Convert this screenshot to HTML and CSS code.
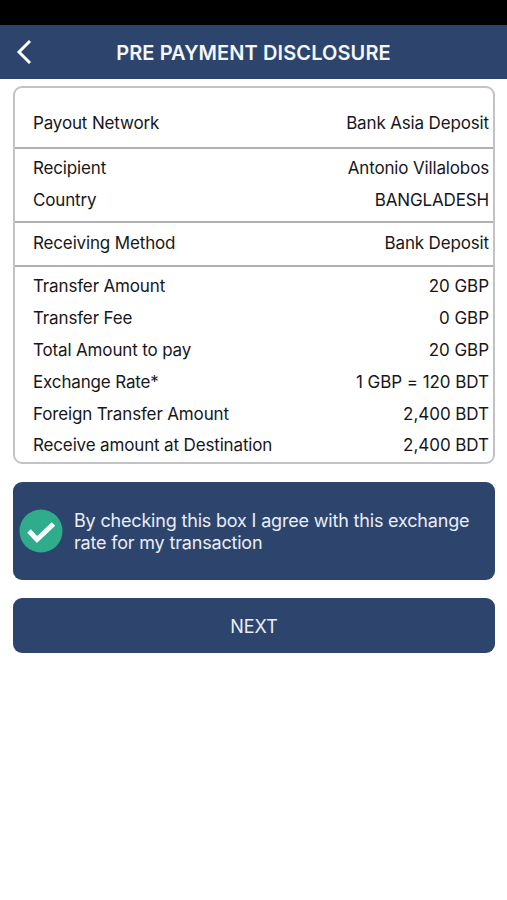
FILE: index.html
```html
<!DOCTYPE html>
<html lang="en">
<head>
<meta charset="utf-8">
<title>Pre Payment Disclosure</title>
<link rel="stylesheet" href="styles.css">
</head>
<body>
<div class="status-bar"></div>
<header class="header">
  <svg class="back" viewBox="0 0 16 26"><path d="M14 2 3 13l11 11"/></svg>
  <h1 class="title">PRE PAYMENT DISCLOSURE</h1>
</header>
<main class="content">
  <section class="card">
    <div class="group group-network">
      <div class="row"><span>Payout Network</span><span>Bank Asia Deposit</span></div>
    </div>
    <div class="group group-recipient">
      <div class="row"><span>Recipient</span><span>Antonio Villalobos</span></div>
      <div class="row"><span>Country</span><span>BANGLADESH</span></div>
    </div>
    <div class="group group-method">
      <div class="row"><span>Receiving Method</span><span>Bank Deposit</span></div>
    </div>
    <div class="group group-amounts">
      <div class="row"><span>Transfer Amount</span><span class="figure">20 GBP</span></div>
      <div class="row"><span>Transfer Fee</span><span class="figure">0 GBP</span></div>
      <div class="row"><span>Total Amount to pay</span><span class="figure">20 GBP</span></div>
      <div class="row"><span>Exchange Rate*</span><span class="figure">1 GBP = 120 BDT</span></div>
      <div class="row"><span>Foreign Transfer Amount</span><span class="figure">2,400 BDT</span></div>
      <div class="row"><span>Receive amount at Destination</span><span class="figure">2,400 BDT</span></div>
    </div>
  </section>
  <div class="agreement">
    <svg class="check" viewBox="0 0 44 44"><circle cx="22" cy="22" r="21.5"/><path d="m10 22 8 8.5L34.500 15"/></svg>
    <p class="agreement-text">By checking this box I agree with this exchange<br>rate for my transaction</p>
  </div>
  <button class="next">NEXT</button>
</main>
</body>
</html>
```

FILE: styles.css
```css
* { box-sizing: border-box; }
body { margin: 0; background: #fff; color: #17171a; font: 17px/22px Inter, sans-serif; }
.status-bar { height: 25px; background: #000; }
.header { display: flex; align-items: center; height: 54px; padding-left: 16px; background: #2d456d; }
.back { width: 16px; height: 26px; fill: none; stroke: #fff; stroke-width: 3; stroke-linecap: butt; }
.title { flex: 1; margin: 1px 32px 0 0; text-align: center; color: #f5f7fc; font-size: 20px; font-weight: 600; letter-spacing: 0.1px; white-space: nowrap; }
.content { padding: 7px 12px 0 13px; }
.card { height: 378px; border: 2px solid #c2c3c5; border-radius: 9px; }
.group { border-bottom: 2px solid #b0b1b3; }
.group:last-child { border-bottom: 0; }
.group-network { height: 61px; padding-top: 19px; }
.group-recipient { height: 74px; padding-top: 3px; }
.group-method { height: 44px; padding-top: 4px; }
.group-amounts { padding-top: 3.5px; }
.row { display: flex; align-items: center; justify-content: space-between; height: 31.8px; padding: 0 4px 0 18px; letter-spacing: -0.15px; white-space: nowrap; }
.figure { letter-spacing: -0.05px; }
.agreement { display: flex; align-items: center; height: 98px; margin-top: 18px; padding-left: 6px; border-radius: 9px; background: #2d456d; color: #e9eef8; }
.check { flex: none; width: 44px; height: 44px; margin-right: 11px; fill: none; stroke: #fff; stroke-width: 5; }
.check circle { fill: #2eac8c; stroke: none; }
.agreement-text { margin: 2px 0 0; font-size: 18px; letter-spacing: -0.18px; white-space: nowrap; }
.next { display: block; width: 100%; height: 55px; margin-top: 18px; padding: 2px 0 0; border: 0; border-radius: 9px; background: #2d456d; color: #e9eef8; font: 18px/22px Inter, sans-serif; }
```
